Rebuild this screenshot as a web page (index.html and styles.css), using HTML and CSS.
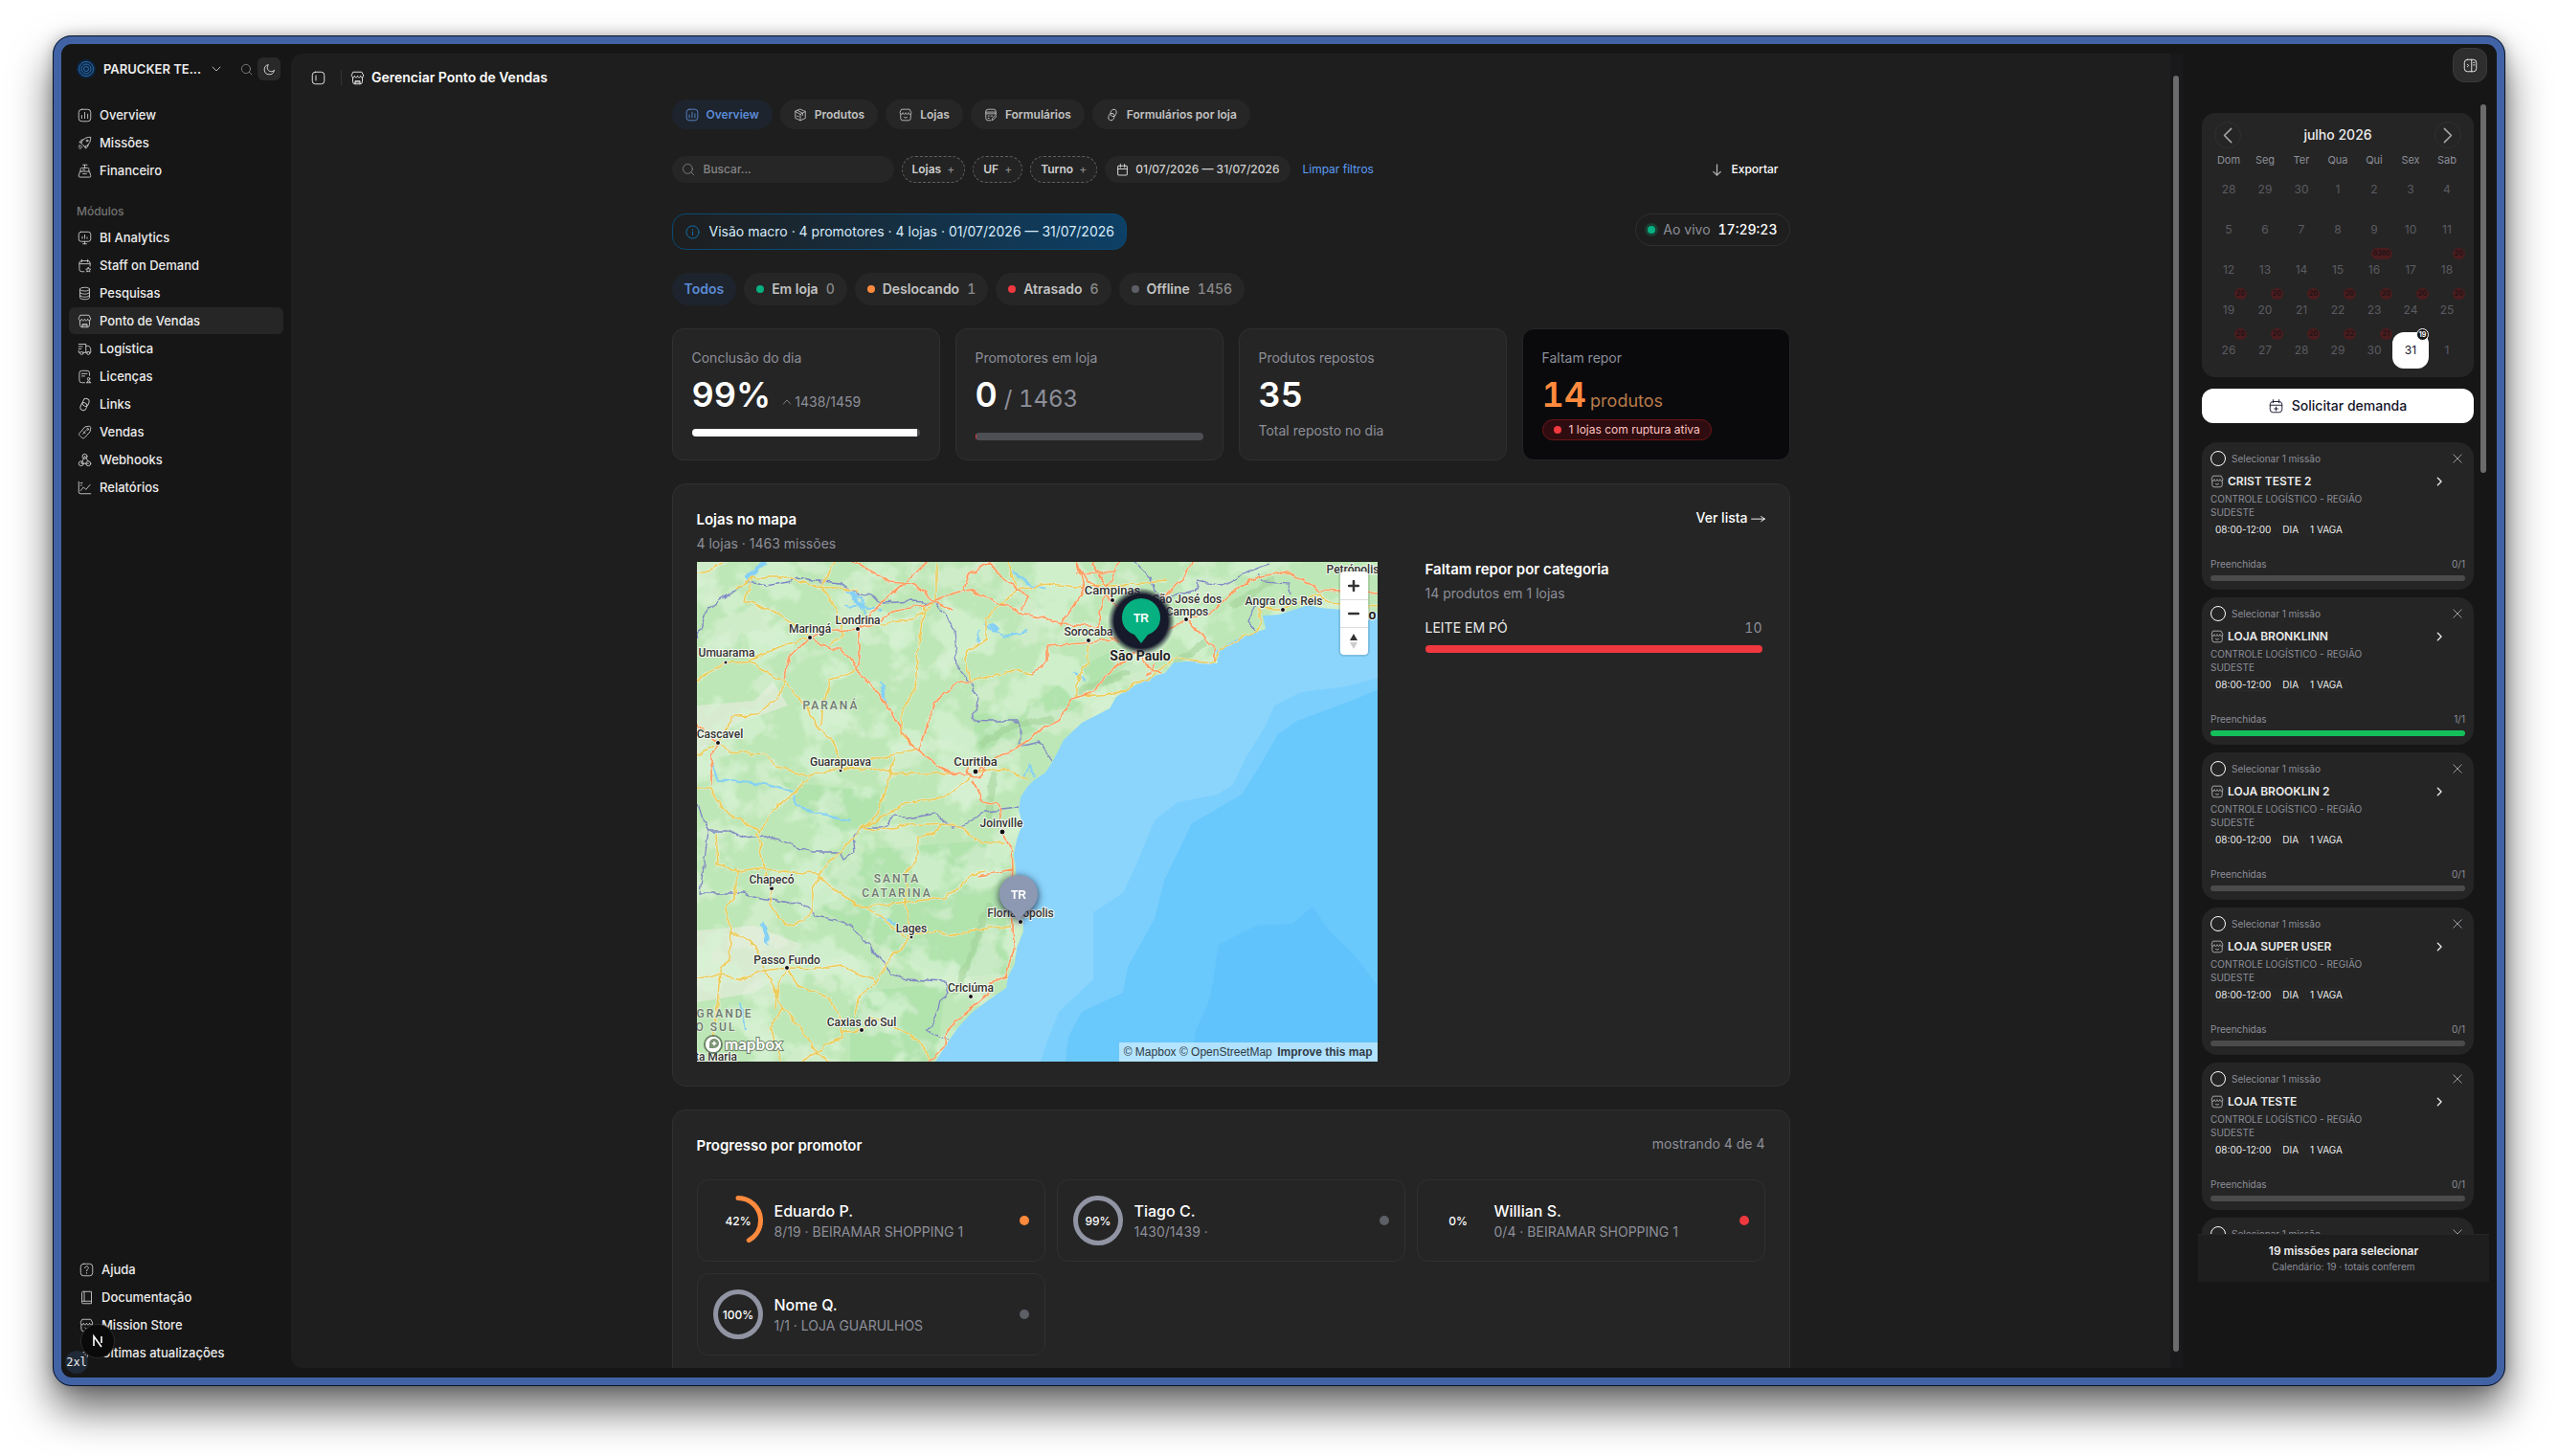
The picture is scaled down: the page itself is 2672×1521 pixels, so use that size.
FILE: index.html
```html
<!DOCTYPE html>
<html lang="pt-BR">
<head>
    <meta charset="UTF-8">
    <title>Gerenciar Ponto de Vendas</title>
    <link rel="stylesheet" href="styles.css">
</head>
<body>
    <!-- icon set -->
    <svg class="sprite" aria-hidden="true">
        <symbol id="i-chart" viewBox="0 0 24 24"><rect x="2" y="2" width="20" height="20" rx="5"/><path d="M7 17v-5M12 17V7M17 17v-7"/></symbol>
        <symbol id="i-rocket" viewBox="0 0 24 24"><path d="M9 15l-3-3c2-6 7-10 16-10 0 9-4 14-10 16zM7 11H3l3-4 4-1M13 17v4l4-3 1-4M6 16l-4 4M8 18l-4 4M4 15l-2 2"/><circle cx="16" cy="8" r="1.5"/></symbol>
        <symbol id="i-cash" viewBox="0 0 24 24"><path d="M5 13V9a2 2 0 0 1 2-2h10a2 2 0 0 1 2 2v4M12 7V2M9 2h7M2 20l2-7h16l2 7v1a1.500 1.500 0 0 1-1.500 1.500h-17A1.500 1.500 0 0 1 2 21zM9 17h6M9 10h3"/></symbol>
        <symbol id="i-board" viewBox="0 0 24 24"><rect x="2" y="2" width="20" height="16" rx="4"/><path d="M8 13v-3M12 13V7M16 13v-2M12 18v4M9 22h6"/></symbol>
        <symbol id="i-calstar" viewBox="0 0 24 24"><path d="M11 22H7a4 4 0 0 1-4-4V8a4 4 0 0 1 4-4h10a4 4 0 0 1 4 4v5M7 2v4M17 2v4M3 9h18M18 15l1 2.500 3 .3-2 2 .6 2.700-2.600-1.500-2.600 1.500.6-2.700-2-2 3-.3z"/></symbol>
        <symbol id="i-db" viewBox="0 0 24 24"><ellipse cx="12" cy="5" rx="8" ry="3"/><path d="M4 5v14c0 1.700 3.600 3 8 3s8-1.300 8-3V5M4 10c0 1.700 3.600 3 8 3s8-1.300 8-3M4 15c0 1.700 3.600 3 8 3s8-1.300 8-3"/></symbol>
        <symbol id="i-store" viewBox="0 0 24 24"><path d="M4 11v7a4 4 0 0 0 4 4h8a4 4 0 0 0 4-4v-7M5 2h14l3 6c0 4-5 4-5 0 0 4-5 4-5 0 0 4-5 4-5 0 0 4-5 4-5 0zM8 22v-5h8v5M8 19h8"/></symbol>
        <symbol id="i-shop" viewBox="0 0 24 24"><path d="M3 10v8a4 4 0 0 0 4 4h10a4 4 0 0 0 4-4v-8M5 2h14l3 6c0 4-5 4-5 0 0 4-5 4-5 0 0 4-5 4-5 0 0 4-5 4-5 0zM9 16c1 2 5 2 6 0"/></symbol>
        <symbol id="i-truck" viewBox="0 0 24 24"><path d="M2 4h12v14H9M14 7h3c3 0 5 3 5 6v5h-2M2 8h6M2 12h4M2 15v3h2M14 18h2"/><circle cx="7" cy="19" r="2.500"/><circle cx="18" cy="19" r="2.500"/></symbol>
        <symbol id="i-license" viewBox="0 0 24 24"><path d="M12 22H7a4 4 0 0 1-4-4V6a4 4 0 0 1 4-4h9a4 4 0 0 1 4 4v4M7 7h9M7 11h5M15 22h7M16 22l1-3h3l1 3"/><circle cx="18.500" cy="15.500" r="2"/></symbol>
        <symbol id="i-link" viewBox="0 0 24 24"><rect x="9" y="2" width="10" height="13" rx="5" transform="rotate(20 14 8)"/><rect x="5" y="9" width="10" height="13" rx="5" transform="rotate(20 10 16)"/></symbol>
        <symbol id="i-tag" viewBox="0 0 24 24"><path d="M13 3l6-1c2 0 3 1 3 3l-1 6-9 10c-2 2-4 1-6-1s-5-4-3-6zM9 15l5-6M10 11l3 3"/><circle cx="17" cy="7" r="1.500"/></symbol>
        <symbol id="i-hook" viewBox="0 0 24 24"><circle cx="12" cy="6" r="4"/><circle cx="6" cy="18" r="4"/><circle cx="18" cy="18" r="4"/><path d="M12 6l-6 12h12M12 6l6 8"/></symbol>
        <symbol id="i-trend" viewBox="0 0 24 24"><path d="M2 2v17a3 3 0 0 0 3 3h17M5 17l5-6 4 4 7-8M5 4h3M5 8h2"/></symbol>
        <symbol id="i-help" viewBox="0 0 24 24"><rect x="2" y="2" width="20" height="20" rx="5"/><path d="M9 9c0-4 6-4 6 0 0 2-3 2-3 5M12 17v1"/></symbol>
        <symbol id="i-book" viewBox="0 0 24 24"><path d="M4 19V4a2 2 0 0 1 2-2h14v16H6a2 2 0 0 0 0 4h14v-4M8 2v16"/></symbol>
        <symbol id="i-spark" viewBox="0 0 24 24"><path d="M12 3l2 7 7 2-7 2-2 7-2-7-7-2 7-2z"/></symbol>
        <symbol id="i-search" viewBox="0 0 24 24"><circle cx="11" cy="11" r="8.500"/><path d="M17 17l5 5"/></symbol>
        <symbol id="i-moon" viewBox="0 0 24 24"><path d="M21 14A9.500 9.500 0 1 1 10 3a7.500 7.500 0 0 0 11 11z"/></symbol>
        <symbol id="i-down" viewBox="0 0 24 24"><path d="M4 8l8 8 8-8"/></symbol>
        <symbol id="i-up" viewBox="0 0 24 24"><path d="M3 17l9-10 9 10"/></symbol>
        <symbol id="i-left" viewBox="0 0 24 24"><path d="M16 3l-9 9 9 9"/></symbol>
        <symbol id="i-right" viewBox="0 0 24 24"><path d="M8 3l9 9-9 9"/></symbol>
        <symbol id="i-panel" viewBox="0 0 24 24"><rect x="2" y="2" width="20" height="20" rx="5"/><path d="M8 8v8"/></symbol>
        <symbol id="i-sidebar" viewBox="0 0 24 24"><rect x="2" y="2" width="20" height="20" rx="5"/><path d="M14 2v20M7 10l2 2-2 2M17 7h2M17 11h2"/></symbol>
        <symbol id="i-box" viewBox="0 0 24 24"><path d="M12 2l9 4v12l-9 4-9-4V6zM3 6l9 5 9-5M12 11v11M7 4l9 5v4M6 14l3 1"/></symbol>
        <symbol id="i-form" viewBox="0 0 24 24"><path d="M12 22H7a4 4 0 0 1-4-4V6a4 4 0 0 1 4-4h10a4 4 0 0 1 4 4v6M3 7h18M3 10h18M7 14h2M12 14h3M7 18h2M14 21l1-3 5-5 2 2-5 5z"/></symbol>
        <symbol id="i-cal" viewBox="0 0 24 24"><rect x="3" y="4" width="18" height="18" rx="2"/><path d="M8 1v6M16 1v6M3 10h18"/></symbol>
        <symbol id="i-calplus" viewBox="0 0 24 24"><rect x="2" y="4" width="20" height="18" rx="5"/><path d="M7 1v5M17 1v5M2 10h20M12 13v6M9 16h6"/></symbol>
        <symbol id="i-info" viewBox="0 0 24 24"><circle cx="12" cy="12" r="10.500"/><path d="M12 11v6M12 7v1"/></symbol>
        <symbol id="i-arrow" viewBox="0 0 24 24"><path d="M12 3v18M6 15l6 6 6-6"/></symbol>
        <symbol id="i-long" viewBox="0 0 24 24"><path d="M1 13h22M17 9l6 4-6 4"/></symbol>
        <symbol id="i-x" viewBox="0 0 24 24"><path d="M2 2l20 20M22 2L2 22"/></symbol>
    </svg>

    <div class="window">
        <aside class="sidebar">
            <div class="workspace">
                <button class="workspace-btn">
                    <svg class="logo" viewBox="0 0 20 20"><circle cx="10" cy="10" r="10" fill="#0b2545"/><g fill="none" stroke="#2f6ea8"><circle cx="10" cy="10" r="7.500"/><circle cx="10" cy="10" r="5"/><circle cx="10" cy="10" r="2.500"/></g></svg>
                    <span>PARUCKER TE...</span>
                    <svg class="icon small"><use href="#i-down"/></svg>
                </button>
                <button class="icon-btn" aria-label="Buscar"><svg class="icon dim"><use href="#i-search"/></svg></button>
                <button class="icon-btn on" aria-label="Tema"><svg class="icon"><use href="#i-moon"/></svg></button>
            </div>
            <nav class="nav">
                <a href="#"><svg class="icon"><use href="#i-chart"/></svg>Overview</a>
                <a href="#"><svg class="icon"><use href="#i-rocket"/></svg>Missões</a>
                <a href="#"><svg class="icon"><use href="#i-cash"/></svg>Financeiro</a>
            </nav>
            <p class="nav-label">Módulos</p>
            <nav class="nav">
                <a href="#"><svg class="icon"><use href="#i-board"/></svg>BI Analytics</a>
                <a href="#"><svg class="icon"><use href="#i-calstar"/></svg>Staff on Demand</a>
                <a href="#"><svg class="icon"><use href="#i-db"/></svg>Pesquisas</a>
                <a href="#" class="active"><svg class="icon"><use href="#i-store"/></svg>Ponto de Vendas</a>
                <a href="#"><svg class="icon"><use href="#i-truck"/></svg>Logística</a>
                <a href="#"><svg class="icon"><use href="#i-license"/></svg>Licenças</a>
                <a href="#"><svg class="icon"><use href="#i-link"/></svg>Links</a>
                <a href="#"><svg class="icon"><use href="#i-tag"/></svg>Vendas</a>
                <a href="#"><svg class="icon"><use href="#i-hook"/></svg>Webhooks</a>
                <a href="#"><svg class="icon"><use href="#i-trend"/></svg>Relatórios</a>
            </nav>
            <nav class="nav nav-bottom">
                <a href="#"><svg class="icon"><use href="#i-help"/></svg>Ajuda</a>
                <a href="#"><svg class="icon"><use href="#i-book"/></svg>Documentação</a>
                <a href="#"><svg class="icon"><use href="#i-shop"/></svg>Mission Store</a>
                <a href="#"><svg class="icon"><use href="#i-spark"/></svg>Últimas atualizações</a>
            </nav>
            <span class="breakpoint">2xl</span>
            <button class="dev-badge" aria-label="Dev tools">
                <svg viewBox="0 0 16 16"><path d="M4 13V3l8 11M12 3v7" fill="none" stroke="#fff" stroke-width="1.600"/></svg>
            </button>
        </aside>

        <main class="main">
            <div class="main-scroll">
                <header class="topbar">
                    <button class="plain" aria-label="Menu"><svg class="icon"><use href="#i-panel"/></svg></button>
                    <span class="divider"></span>
                    <svg class="icon"><use href="#i-store"/></svg>
                    <h1>Gerenciar Ponto de Vendas</h1>
                </header>

                <div class="content">
                    <div class="tabs">
                        <button class="tab active"><svg class="icon"><use href="#i-chart"/></svg>Overview</button>
                        <button class="tab"><svg class="icon"><use href="#i-box"/></svg>Produtos</button>
                        <button class="tab"><svg class="icon"><use href="#i-shop"/></svg>Lojas</button>
                        <button class="tab"><svg class="icon"><use href="#i-form"/></svg>Formulários</button>
                        <button class="tab"><svg class="icon"><use href="#i-link"/></svg>Formulários por loja</button>
                    </div>

                    <div class="filters">
                        <label class="search"><svg class="icon"><use href="#i-search"/></svg><input type="text" placeholder="Buscar..." aria-label="Buscar"></label>
                        <button class="filter">Lojas <span>+</span></button>
                        <button class="filter">UF <span>+</span></button>
                        <button class="filter">Turno <span>+</span></button>
                        <button class="date"><svg class="icon"><use href="#i-cal"/></svg>01/07/2026 — 31/07/2026</button>
                        <a href="#" class="clear">Limpar filtros</a>
                        <button class="export"><svg class="icon"><use href="#i-arrow"/></svg>Exportar</button>
                    </div>

                    <div class="macro">
                        <div class="banner"><svg class="icon"><use href="#i-info"/></svg>Visão macro · 4 promotores · 4 lojas · 01/07/2026 — 31/07/2026</div>
                        <div class="live"><i></i><span>Ao vivo</span><b>17:29:23</b></div>
                    </div>

                    <div class="chips">
                        <button class="chip active">Todos</button>
                        <button class="chip"><i class="dot green"></i>Em loja <span>0</span></button>
                        <button class="chip"><i class="dot orange"></i>Deslocando <span>1</span></button>
                        <button class="chip"><i class="dot red"></i>Atrasado <span>6</span></button>
                        <button class="chip"><i class="dot gray"></i>Offline <span>1456</span></button>
                    </div>

                    <section class="stats">
                        <article class="stat">
                            <h2>Conclusão do dia</h2>
                            <p class="figure"><strong>99%</strong><svg class="icon"><use href="#i-up"/></svg><small>1438/1459</small></p>
                            <div class="bar"><div class="fill white" style="width: 99%"></div></div>
                        </article>
                        <article class="stat">
                            <h2>Promotores em loja</h2>
                            <p class="figure"><strong>0</strong><span class="total">/ 1463</span></p>
                            <div class="bar low"><div class="fill red" style="width: 0.5%"></div></div>
                        </article>
                        <article class="stat">
                            <h2>Produtos repostos</h2>
                            <p class="figure"><strong>35</strong></p>
                            <p class="note">Total reposto no dia</p>
                        </article>
                        <article class="stat alert">
                            <h2>Faltam repor</h2>
                            <p class="figure"><strong>14</strong><span class="unit">produtos</span></p>
                            <p class="rupture"><i class="dot red"></i>1 lojas com ruptura ativa</p>
                        </article>
                    </section>

                    <section class="card map-card">
                        <header class="card-head">
                            <div>
                                <h2>Lojas no mapa</h2>
                                <p>4 lojas · 1463 missões</p>
                            </div>
                            <a href="#">Ver lista <svg class="icon"><use href="#i-long"/></svg></a>
                        </header>
                        <div class="map-row">
                            <div class="map">
                                <svg class="map-art" viewBox="0 0 711 522" preserveAspectRatio="xMidYMid slice">
                                    <defs>
                                        <filter id="rough" x="-5%" y="-5%" width="110%" height="110%"><feTurbulence type="fractalNoise" baseFrequency="0.09" numOctaves="2" seed="4"/><feDisplacementMap in="SourceGraphic" scale="7" xChannelSelector="R" yChannelSelector="G"/></filter>
                                        <filter id="patch-light" x="0" y="0" width="100%" height="100%"><feTurbulence type="fractalNoise" baseFrequency="0.022" numOctaves="4" seed="11"/><feColorMatrix values="0 0 0 0 .835  0 0 0 0 .918  0 0 0 0 .8  9 0 0 0 -5"/></filter>
                                        <filter id="patch-dark" x="0" y="0" width="100%" height="100%"><feTurbulence type="fractalNoise" baseFrequency="0.02" numOctaves="4" seed="23"/><feColorMatrix values="0 0 0 0 .68  0 0 0 0 .89  0 0 0 0 .66  0 9 0 0 -4.700"/></filter>
                                        <clipPath id="land"><path d="M0 0H711V53L690 51 651 48 639 45 608 55 591 56 594 70 565 80 551 88 541 93 544 106 522 103 498 105 489 116 474 120 450 133 438 141 431 153 402 168 383 186 376 200 370 211 364 220 352 228 345 235 338 246 336 260 340 273 334 290 331 306 333 320 335 343 340 366 341 386 334 403 332 420 325 433 323 445 307 456 288 470 273 486 261 503 249 522H0z"/></clipPath>
                                    </defs>
                                    <rect width="711" height="522" fill="#8bd5fd"/>
                                    <path fill="#7bcffd" d="M711 121L679 130 631 136 603 150 593 173 574 203 560 233 543 243 502 251 478 270 459 316 445 346 414 366 414 436 378 470 364 506 359 522H711z"/>
                                    <path fill="#69c8fc" d="M711 133L689 143 627 166 607 180 588 213 569 243 517 273 488 333 478 373 450 423 445 450 402 470 388 496 385 522H711z"/>
                                    <path fill="#61c3fb" d="M643 360L622 378 584 380 545 400 536 456 521 490 517 522H711V443L694 420 679 403 660 385z"/>
                                    <g clip-path="url(#land)">
                                        <rect width="711" height="522" fill="#bde7b6"/>
                                        <path fill="#d8ead0" d="M0 150L60 145 80 125 95 150 40 170 0 200zM0 385L60 380 110 400 90 430 60 450 0 460z"/>
                                        <path fill="#b1e3ad" d="M290 200L370 170 440 120 480 110 440 90 400 110 350 150 290 160zM180 300L320 290 325 430 260 435 190 400 110 350zM90 230L190 240 200 270 130 290zM160 450L260 440 250 522H160z"/>
                                        <rect width="711" height="522" filter="url(#patch-light)" opacity=".4"/>
                                        <rect width="711" height="522" filter="url(#patch-dark)" opacity=".7"/>
                                        <path fill="none" stroke="#9fd094" stroke-width="7" stroke-linecap="round" opacity=".5" filter="url(#rough)" d="M298 190L330 170 370 165M400 135L450 115M500 105L530 85M560 45L600 20M310 222L305 270M270 450L290 400 305 360"/>
                                        <g fill="none" stroke="#85d0f5" stroke-width="2" filter="url(#rough)">
                                            <path d="M155 30L172 36 176 54M155 46L192 50M300 65L320 78 345 72M292 88L296 70M330 10L345 22 365 28M192 125L198 148M15 210L22 228 70 232 100 240 105 255 160 272M190 372L210 378M68 375L75 400M45 460L50 490M395 115L405 125M340 225L348 212 352 225"/>
                                            <path stroke-width="5" d="M50 18L72 0M160 32L174 50M306 64L316 72M192 130L196 142M68 378L74 396"/>
                                        </g>
                                        <g class="rail" filter="url(#rough)">
                                            <path d="M0 79L10 50 39 30 51 20 72 25 96 21 106 16 130 21 149 23 163 31 182 35 194 43 225 41 249 43 259 56 268 70 271 110 285 126 294 143 288 165 306 166 337 166 337 193 349 190 357 188 371 208"/>
                                            <path d="M457 0L474 16 478 30 490 38 520 30 523 20 550 25 575 11 598 2M586 12L592 21 618 23 620 33M584 46L576 63 586 75"/>
                                            <path d="M0 253L12 281 8 310 3 346 24 346 48 346 67 351 96 356 115 360 125 370 153 376 173 391 187 410 204 430 220 436 259 438 263 450 254 460 247 480 240 490 263 500"/>
                                            <path d="M12 281L34 281 48 288 72 286 120 303 149 303 153 311 165 303 163 285 175 278 197 278 206 263 220 268 249 263 268 278 278 276 302 261 335 257"/>
                                        </g>
                                    </g>
                                    <g id="roads" filter="url(#rough)">
                                        <g class="casing">
                                            <use href="#yellow"/><use href="#orange"/>
                                        </g>
                                        <g class="road-yellow">
                                            <path id="yellow" d="M0 12L12 10 26 0M39 28L58 16 96 16 125 26 168 30M58 16L51 40 87 55 118 79M0 125L30 105 53 105 91 125 87 140 63 160 39 161 22 189M53 105L82 90 118 79M144 0L130 26 146 50 153 76 139 86M91 125L110 146 130 176 144 190 150 216M0 201L22 189 34 198 70 201 87 216 115 223 150 216 187 206 206 201 232 193M150 216L182 215 206 221 263 221M168 113L139 123 132 146 130 170M237 46L230 100 228 133 216 153 213 180 225 191M250 0V41L225 60 182 66M335 28L316 46 302 60 302 80 280 96 285 125 330 113 352 116M325 0L335 28 368 23 397 26 434 25 490 20M409 81L407 106 397 126 397 140 438 138 474 120 498 101 541 105 546 91 588 70 588 45 612 50 641 36 651 33 660 43 711 46M0 236L15 236 24 256 51 273 67 283 75 263 96 246 120 223M20 283L22 316 44 323 63 320 87 323 125 326 144 343 173 361 220 355 259 351 278 336 287 326 302 323M63 283L70 320 78 341 77 356 87 373 101 381 120 366 120 346 127 326 149 303 173 278 216 253 259 246 287 223M173 278L187 281 220 275 259 273 278 278 297 295 321 293M256 273L249 283 230 288 230 310 218 326 218 356 223 390M177 361L197 375 216 390 249 386 273 391 287 383 328 381M223 390L197 420 187 440 168 456 165 476M0 435L24 431 46 436 77 426 94 424 130 425 149 421 182 436 187 441M41 320V346L29 363 36 386 60 400 72 426 82 450 89 466 108 486 125 513 139 522M36 386L34 413 24 430 20 476 17 500M94 424L106 443 139 456 149 476 151 496 125 511 110 522M151 490L172 489 182 476 201 483 235 503 242 520M89 466L77 486 87 522M94 424L84 443 82 466M206 205L200 230 189 263 173 278M345 228L320 215 291 219"/>
                                        </g>
                                        <g class="road-orange">
                                            <path id="orange" d="M163 0L201 21 225 23 249 42 268 50M240 0L220 20 192 43 170 68 170 100 166 112M118 79L139 90 151 90 168 113 192 140 223 190 263 221 287 222M118 79L96 100 91 123M118 79L134 73 168 70 182 66 205 52 249 42M250 41L278 28 285 13 305 0 316 13 345 36 340 50M278 28L306 38 345 55 388 65 419 68M352 116L366 103 366 88 402 85 440 80M291 219L316 203 335 195 359 175 378 166 392 143 414 136 431 115 450 100 464 93M464 80L498 68 512 60 536 53 562 30 584 16 617 10 651 30 711 33M397 0L404 16 434 41 450 63M414 0L426 23 434 40M442 0L431 23 419 60 419 68 440 85M397 12L440 10M380 66L404 30 397 0M520 0L498 26 478 46M512 63L531 80 541 90 541 105M232 196L239 176 249 146 273 126 284 124M287 228L299 250 316 253 318 283 328 300 329 320 328 333 330 380 331 403 323 433 306 440 302 453 278 473 261 490 259 506 242 522M0 170L22 189 15 203 15 233M329 321L306 326 294 328M282 216a9 9 0 1 0 18 0a9 9 0 1 0-18 0M462 93L470 110 485 116M478 108L470 118"/>
                                        </g>
                                    </g>
                                    <g class="towns">
                                        <circle cx="118" cy="79" r="2.500"/><circle cx="168" cy="70" r="2.500"/><circle cx="30" cy="105" r="2"/><circle cx="22" cy="189" r="2.500"/><circle cx="150" cy="218" r="2"/><circle cx="291" cy="219" r="3"/><circle cx="434" cy="40" r="2.500"/><circle cx="511" cy="60" r="2.500"/><circle cx="612" cy="50" r="2.500"/><circle cx="409" cy="82" r="2.500"/><circle cx="319" cy="282" r="3"/><circle cx="78" cy="341" r="2.500"/><circle cx="224" cy="392" r="2"/><circle cx="338" cy="376" r="2.500"/><circle cx="94" cy="424" r="2.500"/><circle cx="286" cy="454" r="2.500"/><circle cx="172" cy="489" r="2.500"/>
                                    </g>
                                    <g class="places">
                                        <text x="118" y="74">Maringá</text><text x="168" y="65">Londrina</text><text x="31" y="99">Umuarama</text><text x="24" y="184">Cascavel</text><text x="150" y="213">Guarapuava</text><text class="city" x="291" y="213">Curitiba</text><text class="city" x="434" y="34">Campinas</text><text x="512" y="43">São José dos</text><text x="512" y="56">Campos</text><text x="613" y="45">Angra dos Reis</text><text x="685" y="12">Petrópolis</text><text x="409" y="77">Sorocaba</text><text class="capital" x="463" y="103">São Paulo</text><text class="capital" x="699" y="60">Rio</text><text x="318" y="277">Joinville</text><text x="78" y="336">Chapecó</text><text x="224" y="387">Lages</text><text x="338" y="371">Florianópolis</text><text x="94" y="420">Passo Fundo</text><text x="286" y="449">Criciúma</text><text x="172" y="485">Caxias do Sul</text><text x="20" y="521">ta Maria</text>
                                    </g>
                                    <g class="states">
                                        <text x="140" y="154">PARANÁ</text><text x="209" y="335">SANTA</text><text x="209" y="350">CATARINA</text><text x="29" y="476">GRANDE</text><text x="20" y="490">O SUL</text>
                                    </g>
                                    <g class="mapbox">
                                        <circle cx="17" cy="504" r="9" fill="none" stroke="#6b8266" stroke-width="2"/><circle cx="17" cy="504" r="8" fill="#fff"/><path d="M13 508v-5a5 5 0 1 1 5 5z" fill="#7c9476"/><path d="M18 500l1 2 2 1-2 1-1 2-1-2-2-1 2-1z" fill="#fff"/>
                                        <text x="29" y="510">mapbox</text>
                                    </g>
                                </svg>
                                <svg class="pin halo" viewBox="0 0 70 70"><defs><radialGradient id="glow"><stop offset=".8" stop-color="#161a2b"/><stop offset="1" stop-color="#161a2b" stop-opacity="0"/></radialGradient></defs><circle cx="35" cy="35" r="35" fill="url(#glow)"/><path fill="#06b080" d="M35 58L28 49C20 46 15 40 15 31a20 20 0 0 1 40 0C55 40 50 46 42 49z"/><text x="35" y="36">TR</text></svg>
                                <svg class="pin gray-pin" viewBox="0 0 70 70"><path fill="#8d99b3" d="M35 59L27 49C20 46 15 40 15 31a20 20 0 0 1 40 0C55 40 50 46 43 49z"/><text x="35" y="36">TR</text></svg>
                                <div class="map-controls">
                                    <button aria-label="Zoom in"><svg viewBox="0 0 12 12"><path d="M6 1v10M1 6h10" stroke="#333" stroke-width="2.500" stroke-linecap="round"/></svg></button>
                                    <button aria-label="Zoom out"><svg viewBox="0 0 12 12"><path d="M1 6h10" stroke="#333" stroke-width="2.500" stroke-linecap="round"/></svg></button>
                                    <button aria-label="Reset bearing"><svg viewBox="0 0 12 18"><path d="M6 1L10 8H2z" fill="#333"/><path d="M2 10h8L6 17z" fill="#ccc"/></svg></button>
                                </div>
                                <div class="attribution"><a href="#">© Mapbox</a> <a href="#">© OpenStreetMap</a> <a href="#" class="improve">Improve this map</a></div>
                            </div>
                            <div class="categories">
                                <h2>Faltam repor por categoria</h2>
                                <p>14 produtos em 1 lojas</p>
                                <div class="category"><span>LEITE EM PÓ</span><em>10</em></div>
                                <div class="bar"><div class="fill red" style="width: 100%"></div></div>
                            </div>
                        </div>
                    </section>

                    <section class="card progress-card">
                        <header class="card-head">
                            <h2>Progresso por promotor</h2>
                            <p>mostrando 4 de 4</p>
                        </header>
                        <div class="promoters">
                            <article class="promoter">
                                <svg class="ring" viewBox="0 0 52 52"><circle cx="26" cy="26" r="23.500" pathLength="100" stroke="#ff8a3d" stroke-dasharray="42 100"/><text x="26" y="31">42%</text></svg>
                                <div><h3>Eduardo P.</h3><p>8/19 · BEIRAMAR SHOPPING 1</p></div>
                                <i class="dot big orange"></i>
                            </article>
                            <article class="promoter">
                                <svg class="ring" viewBox="0 0 52 52"><circle cx="26" cy="26" r="23.500" pathLength="100" stroke="#9194a3" stroke-dasharray="99 100"/><text x="26" y="31">99%</text></svg>
                                <div><h3>Tiago C.</h3><p>1430/1439 ·</p></div>
                                <i class="dot big gray"></i>
                            </article>
                            <article class="promoter">
                                <svg class="ring" viewBox="0 0 52 52"><text x="26" y="31">0%</text></svg>
                                <div><h3>Willian S.</h3><p>0/4 · BEIRAMAR SHOPPING 1</p></div>
                                <i class="dot big red"></i>
                            </article>
                            <article class="promoter">
                                <svg class="ring" viewBox="0 0 52 52"><circle cx="26" cy="26" r="23.500" pathLength="100" stroke="#9194a3"/><text x="26" y="31">100%</text></svg>
                                <div><h3>Nome Q.</h3><p>1/1 · LOJA GUARULHOS</p></div>
                                <i class="dot big gray"></i>
                            </article>
                        </div>
                    </section>
                </div>
            </div>
            <div class="rail-v"><span></span></div>
        </main>

        <aside class="agenda">
            <div class="agenda-top"><button aria-label="Painel"><svg class="icon"><use href="#i-sidebar"/></svg></button></div>
            <div class="agenda-scroll">
                <section class="calendar">
                    <header>
                        <button aria-label="Mês anterior"><svg class="icon"><use href="#i-left"/></svg></button>
                        <h2>julho 2026</h2>
                        <button aria-label="Próximo mês"><svg class="icon"><use href="#i-right"/></svg></button>
                    </header>
                    <table>
                        <thead><tr><th>Dom</th><th>Seg</th><th>Ter</th><th>Qua</th><th>Qui</th><th>Sex</th><th>Sab</th></tr></thead>
                        <tbody>
                            <tr><td>28</td><td>29</td><td>30</td><td>1</td><td>2</td><td>3</td><td>4</td></tr>
                            <tr><td>5</td><td>6</td><td>7</td><td>8</td><td>9</td><td>10</td><td>11</td></tr>
                            <tr><td>12</td><td>13</td><td>14</td><td>15</td><td>16<i>6380</i></td><td>17</td><td>18<i>20</i></td></tr>
                            <tr><td>19<i>20</i></td><td>20<i>20</i></td><td>21<i>20</i></td><td>22<i>20</i></td><td>23<i>20</i></td><td>24<i>20</i></td><td>25<i>20</i></td></tr>
                            <tr><td>26<i>20</i></td><td>27<i>20</i></td><td>28<i>20</i></td><td>29<i>22</i></td><td>30<i>21</i></td><td class="today"><button>31</button><i>19</i></td><td>1</td></tr>
                        </tbody>
                    </table>
                </section>

                <button class="request"><svg class="icon"><use href="#i-calplus"/></svg>Solicitar demanda</button>

                <div class="missions">
                    <article class="mission">
                        <div class="pick"><label><input type="checkbox">Selecionar 1 missão</label><button aria-label="Remover"><svg class="icon"><use href="#i-x"/></svg></button></div>
                        <h3><svg class="icon"><use href="#i-shop"/></svg><span>CRIST TESTE 2</span><svg class="icon go"><use href="#i-right"/></svg></h3>
                        <p class="desc">CONTROLE LOGÍSTICO - REGIÃO SUDESTE</p>
                        <p class="tags"><span>08:00-12:00</span><span>DIA</span><span>1 VAGA</span></p>
                        <p class="filled"><span>Preenchidas</span><span>0/1</span></p>
                        <div class="meter"><div style="width: 0%"></div></div>
                    </article>
                    <article class="mission">
                        <div class="pick"><label><input type="checkbox">Selecionar 1 missão</label><button aria-label="Remover"><svg class="icon"><use href="#i-x"/></svg></button></div>
                        <h3><svg class="icon"><use href="#i-shop"/></svg><span>LOJA BRONKLINN</span><svg class="icon go"><use href="#i-right"/></svg></h3>
                        <p class="desc">CONTROLE LOGÍSTICO - REGIÃO SUDESTE</p>
                        <p class="tags"><span>08:00-12:00</span><span>DIA</span><span>1 VAGA</span></p>
                        <p class="filled"><span>Preenchidas</span><span>1/1</span></p>
                        <div class="meter"><div style="width: 100%"></div></div>
                    </article>
                    <article class="mission">
                        <div class="pick"><label><input type="checkbox">Selecionar 1 missão</label><button aria-label="Remover"><svg class="icon"><use href="#i-x"/></svg></button></div>
                        <h3><svg class="icon"><use href="#i-shop"/></svg><span>LOJA BROOKLIN 2</span><svg class="icon go"><use href="#i-right"/></svg></h3>
                        <p class="desc">CONTROLE LOGÍSTICO - REGIÃO SUDESTE</p>
                        <p class="tags"><span>08:00-12:00</span><span>DIA</span><span>1 VAGA</span></p>
                        <p class="filled"><span>Preenchidas</span><span>0/1</span></p>
                        <div class="meter"><div style="width: 0%"></div></div>
                    </article>
                    <article class="mission">
                        <div class="pick"><label><input type="checkbox">Selecionar 1 missão</label><button aria-label="Remover"><svg class="icon"><use href="#i-x"/></svg></button></div>
                        <h3><svg class="icon"><use href="#i-shop"/></svg><span>LOJA SUPER USER</span><svg class="icon go"><use href="#i-right"/></svg></h3>
                        <p class="desc">CONTROLE LOGÍSTICO - REGIÃO SUDESTE</p>
                        <p class="tags"><span>08:00-12:00</span><span>DIA</span><span>1 VAGA</span></p>
                        <p class="filled"><span>Preenchidas</span><span>0/1</span></p>
                        <div class="meter"><div style="width: 0%"></div></div>
                    </article>
                    <article class="mission">
                        <div class="pick"><label><input type="checkbox">Selecionar 1 missão</label><button aria-label="Remover"><svg class="icon"><use href="#i-x"/></svg></button></div>
                        <h3><svg class="icon"><use href="#i-shop"/></svg><span>LOJA TESTE</span><svg class="icon go"><use href="#i-right"/></svg></h3>
                        <p class="desc">CONTROLE LOGÍSTICO - REGIÃO SUDESTE</p>
                        <p class="tags"><span>08:00-12:00</span><span>DIA</span><span>1 VAGA</span></p>
                        <p class="filled"><span>Preenchidas</span><span>0/1</span></p>
                        <div class="meter"><div style="width: 0%"></div></div>
                    </article>
                    <article class="mission">
                        <div class="pick"><label><input type="checkbox">Selecionar 1 missão</label><button aria-label="Remover"><svg class="icon"><use href="#i-x"/></svg></button></div>
                    </article>
                </div>
                <span class="thumb"></span>
            </div>
            <footer class="agenda-foot">
                <strong>19 missões para selecionar</strong>
                <p>Calendário: 19 · totais conferem</p>
            </footer>
        </aside>
    </div>
</body>
</html>
```
FILE: styles.css
```css
* {
    box-sizing: border-box;
    margin: 0;
    padding: 0;
}
body {
    height: 100vh;
    padding: 37px 55px 73px;
    background: #fff;
    font-family: Inter, sans-serif;
    font-size: 14px;
    line-height: 20px;
    color: #ececec;
    overflow: hidden;
}
button {
    font: inherit;
    color: inherit;
    background: none;
    border: none;
    cursor: pointer;
}
a {
    color: inherit;
    text-decoration: none;
}
.sprite {
    display: none;
}
.icon {
    flex: none;
    display: block;
    width: 15px;
    height: 15px;
    fill: none;
    stroke: currentColor;
    stroke-width: 1.5;
    stroke-linecap: round;
    stroke-linejoin: round;
}
.window {
    display: flex;
    height: 100%;
    background: #161616;
    border: 9px solid #4163a6;
    border-radius: 20px;
    outline: 1px solid #0c1220;
    outline-offset: -1px;
    box-shadow: 0 24px 44px rgba(0, 0, 0, 0.6), 0 0 14px rgba(0, 0, 0, 0.25);
}

/* sidebar */
.sidebar {
    position: relative;
    flex: none;
    display: flex;
    flex-direction: column;
    width: 240px;
    padding: 14px 8px 12px;
}
.workspace {
    display: flex;
    align-items: center;
    height: 24px;
    margin-bottom: 22px;
    padding: 0 3px 0 8px;
}
.workspace-btn {
    flex: 1;
    display: flex;
    align-items: center;
    gap: 8px;
    font-weight: 600;
    font-size: 13px;
}
.workspace-btn .small {
    width: 12px;
    height: 12px;
    margin-left: 2px;
}
.logo {
    width: 20px;
    height: 20px;
}
.icon-btn {
    display: grid;
    place-items: center;
    width: 24px;
    height: 24px;
    border-radius: 6px;
}
.icon-btn .icon {
    width: 13px;
    height: 13px;
}
.icon-btn.on {
    background: #292929;
}
.dim {
    color: #8a8a8a;
}
.nav {
    display: flex;
    flex-direction: column;
    gap: 1px;
}
.nav a {
    display: flex;
    align-items: center;
    gap: 8px;
    height: 28px;
    padding: 0 9px;
    border-radius: 6px;
    font-size: 13px;
    font-weight: 500;
}
.nav .icon {
    color: #c4c4c4;
}
.nav a.active {
    background: #262626;
}
.nav-label {
    margin: 19px 0 3px;
    padding: 0 8px;
    font-size: 12px;
    font-weight: 500;
    color: #747474;
}
.nav-bottom {
    margin-top: auto;
    padding-left: 2px;
}
.breakpoint {
    position: absolute;
    left: 4px;
    bottom: 4px;
    width: 24px;
    height: 24px;
    border-radius: 50%;
    background: #1f2937;
    font: 12px/24px "DejaVu Sans Mono", monospace;
    text-align: center;
}
.dev-badge {
    position: absolute;
    left: 20px;
    bottom: 20px;
    display: grid;
    place-items: center;
    width: 36px;
    height: 36px;
    border: 1px solid #2b2b2b;
    border-radius: 50%;
    background: #0a0a0a;
}
.dev-badge svg {
    width: 16px;
    height: 16px;
}

/* main panel */
.main {
    flex: 1;
    display: flex;
    min-width: 0;
    margin: 10px 0;
    background: #1e1e1e;
    border-radius: 12px 0 0 12px;
    overflow: hidden;
}
.main-scroll {
    flex: 1;
    min-width: 0;
    overflow: hidden;
}
.rail-v {
    width: 13px;
    padding: 23px 4px 17px 3px;
    background: #19191b;
}
.rail-v span {
    display: block;
    height: 100%;
    border-radius: 3px;
    background: #6b6b6b;
}
.topbar {
    display: flex;
    align-items: center;
    height: 48px;
    padding: 2px 21px 0;
}
.topbar h1 {
    margin-left: 7px;
    font-size: 14px;
    font-weight: 600;
    color: #fff;
}
.divider {
    width: 1px;
    height: 16px;
    margin: 0 9px 0 16px;
    background: #333;
}
.content {
    max-width: 1168px;
    margin: 0 auto;
}
.tabs,
.filters,
.chips {
    display: flex;
    align-items: center;
    gap: 8px;
}
.tab {
    display: flex;
    align-items: center;
    gap: 8px;
    height: 31px;
    padding: 0 14px;
    border-radius: 16px;
    background: #262626;
    font-size: 12px;
    font-weight: 600;
    color: #c2c2c2;
}
.tab .icon {
    width: 14px;
    height: 14px;
}
.tab.active,
.chip.active {
    background: #1e242d;
    color: #5b8ad6;
}
.filters {
    height: 28px;
    margin-top: 28px;
    font-size: 12px;
    font-weight: 500;
    color: #cfcfcf;
}
.search {
    display: flex;
    align-items: center;
    gap: 9px;
    width: 232px;
    height: 28px;
    padding: 0 10px;
    border-radius: 14px;
    background: #262626;
    color: #858585;
}
.search .icon {
    width: 14px;
    height: 14px;
}
.search input {
    width: 100%;
    border: none;
    outline: none;
    background: none;
    font: inherit;
    color: #eee;
}
.search input::placeholder {
    color: #858585;
}
.filter {
    height: 28px;
    padding: 0 10px;
    border: 1px dashed #5f5f5f;
    border-radius: 14px;
    background: #232323;
    font-weight: 600;
}
.filter span {
    margin-left: 3px;
    color: #8a8a8a;
    font-weight: 500;
}
.date {
    display: flex;
    align-items: center;
    gap: 7px;
    height: 28px;
    padding: 0 12px;
    border-radius: 14px;
    background: #262626;
}
.date .icon {
    width: 13px;
    height: 13px;
    stroke-width: 2;
}
.clear {
    margin-left: 4px;
    color: #5c9cf5;
    font-weight: 400;
}
.export {
    display: flex;
    align-items: center;
    gap: 7px;
    margin-left: auto;
    padding: 0 12px;
    color: #fff;
}
.export .icon {
    color: #b5b5b5;
    stroke-width: 2;
}
.macro {
    display: flex;
    align-items: flex-start;
    justify-content: space-between;
    margin-top: 32px;
}
.banner {
    display: flex;
    align-items: center;
    gap: 10px;
    height: 38px;
    padding: 0 12px 0 13px;
    border: 1px solid #0a4a75;
    border-radius: 14px;
    background: linear-gradient(90deg, #1e1e1e, #0d4066);
    color: #d6eafa;
}
.banner .icon {
    color: #1272ad;
}
.live {
    display: flex;
    align-items: center;
    height: 34px;
    padding: 0 12px;
    border: 1px solid #303030;
    border-radius: 17px;
    color: #8d8f99;
}
.live i {
    width: 8px;
    height: 8px;
    margin-right: 8px;
    border-radius: 50%;
    background: #06b080;
    box-shadow: 0 0 0 3px #1b3d32;
}
.live b {
    margin-left: 8px;
    font-weight: 500;
    color: #fff;
    font-variant-numeric: tabular-nums;
}
.chips {
    margin-top: 24px;
}
.chip {
    display: flex;
    align-items: center;
    gap: 8px;
    height: 34px;
    padding: 0 13px;
    border-radius: 17px;
    background: #262626;
    font-weight: 600;
    color: #c2c2c2;
}
.chip span {
    font-weight: 500;
    color: #8a8a8a;
    font-variant-numeric: tabular-nums;
}
.dot {
    flex: none;
    width: 8px;
    height: 8px;
    border-radius: 50%;
}
.dot.big {
    width: 10px;
    height: 10px;
}
.green { background: #06b080; }
.orange { background: #ff8a3d; }
.red { background: #f0383f; }
.gray { background: #5d5f66; }
.white { background: #fff; }

/* stat cards */
.stats {
    display: grid;
    grid-template-columns: repeat(4, 1fr);
    gap: 16px;
    margin: 24px 0;
}
.stat {
    height: 138px;
    padding: 20px;
    border: 1px solid #303030;
    border-radius: 12px;
    background: #252525;
}
.stat h2,
.note {
    font-size: 14px;
    font-weight: 400;
    color: #8d8f99;
}
.figure {
    display: flex;
    align-items: baseline;
    height: 40px;
    margin: 8px 0 16px;
    line-height: 40px;
    color: #8d8f99;
    font-variant-numeric: tabular-nums;
}
.figure strong {
    font-size: 36px;
    font-weight: 600;
    color: #fff;
}
.figure .icon {
    width: 10px;
    height: 10px;
    margin: 0 3px 0 12px;
    stroke-width: 2;
}
.figure small {
    font-size: 14px;
    font-variant-numeric: normal;
}
.total {
    margin-left: 7px;
    font-size: 24px;
}
.bar {
    height: 8px;
    border-radius: 4px;
    background: #4e4f54;
    overflow: hidden;
}
.bar.low {
    margin-top: 20px;
}
.fill {
    height: 100%;
}
.note {
    margin-top: -8px;
}
.stat.alert {
    border-color: #26262a;
    background: #0a0a0d;
}
.alert .figure {
    margin-bottom: 6px;
}
.alert .figure strong {
    color: #ff8a3d;
}
.unit {
    margin-left: 4px;
    font-size: 18px;
    color: #b87c4b;
}
.rupture {
    display: inline-flex;
    align-items: center;
    gap: 8px;
    height: 22px;
    padding: 0 11px;
    border: 1px solid #6b1517;
    border-radius: 11px;
    background: #2f0c0f;
    font-size: 12px;
    color: #fbc1c1;
}

/* cards */
.card {
    padding: 25px;
    border: 1px solid #303030;
    border-radius: 14px;
    background: #252525;
}
.card h2 {
    font-size: 15px;
    line-height: 24px;
    font-weight: 600;
    color: #fff;
}
.card p {
    color: #8d8f99;
}
.card-head {
    display: flex;
    justify-content: space-between;
}
.card-head a {
    display: flex;
    align-items: center;
    gap: 3px;
    height: 20px;
    font-weight: 500;
    color: #fff;
}
.map-card .card-head {
    height: 56px;
}
.map-card .card-head p {
    margin-top: 3px;
}
.map-row {
    display: grid;
    grid-template-columns: 711fr 405fr;
}
.map {
    position: relative;
    height: 522px;
    overflow: hidden;
    background: #8bd5fd;
}
.map-art {
    display: block;
    width: 100%;
    height: 100%;
}
.casing {
    fill: none;
    stroke: #f4f4e4;
    stroke-width: 3;
    opacity: 0.6;
}
.rail {
    fill: none;
    stroke: #7f86c4;
    stroke-width: 1.3;
}
.road-yellow {
    fill: none;
    stroke: #edcb55;
    stroke-width: 1.5;
}
.road-orange {
    fill: none;
    stroke: #ff9b5e;
    stroke-width: 1.7;
}
#yellow,
#orange {
    stroke-linejoin: round;
}
.towns circle {
    fill: #111;
    stroke: #fff;
    stroke-width: 1;
}
.places text {
    font: 500 12px Roboto, sans-serif;
    text-anchor: middle;
    fill: #333;
    stroke: #f5faf0;
    stroke-width: 2;
    stroke-linejoin: round;
    paint-order: stroke;
}
.places .city {
    font-size: 13px;
}
.places .capital {
    font-size: 14px;
    font-weight: 700;
    fill: #222;
}
.states text {
    font: 500 12px Roboto, sans-serif;
    letter-spacing: 2px;
    text-anchor: middle;
    fill: #6f7a70;
    stroke: #dcefd6;
    stroke-width: 2;
    paint-order: stroke;
}
.mapbox text {
    font: 700 17px Lato, sans-serif;
    fill: #fff;
    stroke: #6b8266;
    stroke-width: 2;
    paint-order: stroke;
}
.pin {
    position: absolute;
    width: 70px;
    height: 70px;
    overflow: visible;
}
.halo {
    left: calc(65% - 33px);
    top: 27px;
}
.gray-pin {
    left: calc(47% - 33px);
    top: 316px;
    filter: drop-shadow(0 2px 4px rgba(20, 25, 50, 0.9));
}
.pin text {
    font: 700 12px "Liberation Sans", sans-serif;
    text-anchor: middle;
    fill: #fff;
}
.map-controls {
    position: absolute;
    top: 10px;
    right: 10px;
    display: flex;
    flex-direction: column;
    width: 29px;
    border-radius: 4px;
    background: #fff;
    box-shadow: 0 0 0 2px rgba(0, 0, 0, 0.1);
}
.map-controls button {
    display: grid;
    place-items: center;
    height: 29px;
}
.map-controls button + button {
    border-top: 1px solid #ddd;
}
.map-controls svg {
    height: 12px;
    fill: none;
}
.map-controls button:last-child svg {
    height: 18px;
}
.attribution {
    position: absolute;
    right: 0;
    bottom: 0;
    padding: 0 5px;
    background: rgba(255, 255, 255, 0.5);
    font: 12px/20px "Liberation Sans", sans-serif;
    color: #2f3b44;
}
.improve {
    margin-left: 2px;
    font-weight: 700;
}
.categories {
    padding: 0 3px 0 50px;
}
.categories h2 {
    margin-top: -4px;
}
.categories p {
    margin-top: 3px;
}
.category {
    display: flex;
    justify-content: space-between;
    margin: 16px 0 8px;
}
.category em {
    font-style: normal;
    color: #8d8f99;
    font-variant-numeric: tabular-nums;
}
.progress-card {
    margin-top: 24px;
}
.promoters {
    display: grid;
    grid-template-columns: repeat(3, 1fr);
    gap: 12px;
    margin-top: 23px;
}
.promoter {
    display: flex;
    align-items: center;
    gap: 12px;
    height: 86px;
    padding: 0 16px;
    border: 1px solid #303030;
    border-radius: 12px;
}
.promoter > div {
    flex: 1;
}
.promoter h3 {
    font-size: 16px;
    line-height: 24px;
    font-weight: 500;
    color: #fff;
}
.ring {
    width: 52px;
    height: 52px;
}
.ring circle {
    fill: none;
    stroke-width: 5;
    stroke-linecap: round;
    transform: rotate(-90deg);
    transform-origin: center;
}
.ring text {
    font-size: 12px;
    font-weight: 500;
    text-anchor: middle;
    fill: #fff;
}

/* agenda */
.agenda {
    flex: none;
    display: flex;
    flex-direction: column;
    width: 328px;
    padding-bottom: 100px;
}
.agenda-top {
    display: flex;
    justify-content: flex-end;
    height: 62px;
    padding: 4px 10px 0;
}
.agenda-top button {
    display: grid;
    place-items: center;
    width: 36px;
    height: 36px;
    border: 1px solid #3a3a3a;
    border-radius: 12px;
    background: #2e2e2e;
}
.agenda-scroll {
    position: relative;
    flex: 1;
    min-height: 0;
    padding: 10px 24px 0 20px;
    overflow: hidden;
}
.thumb {
    position: absolute;
    top: 1px;
    right: 11px;
    width: 6px;
    height: 385px;
    border-radius: 3px;
    background: #6b6b6b;
}
.calendar {
    height: 276px;
    padding: 9px;
    border-radius: 14px;
    background: #252525;
}
.calendar header {
    display: flex;
    align-items: center;
    justify-content: space-between;
    padding: 0 4px;
}
.calendar h2 {
    font-size: 14px;
    font-weight: 500;
}
.calendar header button {
    display: grid;
    place-items: center;
    width: 28px;
    height: 28px;
    border: 1px solid #303030;
    border-radius: 50%;
    color: #a5a5a5;
}
.calendar header .icon {
    width: 19px;
    height: 19px;
    stroke-width: 2;
}
.calendar table {
    width: 100%;
    table-layout: fixed;
    border-collapse: collapse;
    text-align: center;
}
.calendar th {
    height: 22px;
    padding-top: 2px;
    font-size: 11px;
    font-weight: 400;
    color: #8d8f99;
}
.calendar td {
    position: relative;
    height: 42px;
    font-size: 12px;
    color: #5b5c62;
}
.calendar td i {
    position: absolute;
    top: -2px;
    right: 0;
    min-width: 13px;
    padding: 0 2px;
    border-radius: 7px;
    background: #4b1c1e;
    font: 700 7px/12px Inter, sans-serif;
    color: #201416;
}
.today button {
    width: 38px;
    height: 38px;
    border-radius: 12px;
    background: #fff;
    color: #14142b;
}
.calendar .today i {
    border: 1px solid #fff;
    padding: 0 1px;
    background: #161616;
    line-height: 11px;
    color: #fff;
}
.request {
    display: flex;
    align-items: center;
    justify-content: center;
    gap: 9px;
    width: 100%;
    height: 36px;
    margin: 12px 0 20px;
    border-radius: 12px;
    background: #fff;
    font-weight: 500;
    color: #14142b;
}
.missions {
    display: flex;
    flex-direction: column;
    gap: 8px;
}
.mission {
    min-height: 154px;
    padding: 9px;
    border-radius: 16px;
    background: #252525;
    font-size: 10px;
    line-height: 14px;
    color: #8d8f99;
}
.pick,
.filled {
    display: flex;
    align-items: center;
    justify-content: space-between;
}
.pick label {
    display: flex;
    align-items: center;
    gap: 6px;
}
.pick input {
    appearance: none;
    width: 16px;
    height: 16px;
    border: 1px solid #fff;
    border-radius: 50%;
}
.pick button {
    padding-right: 3px;
    color: #b5b5bd;
}
.pick .icon {
    width: 10px;
    height: 10px;
    stroke-width: 2;
}
.mission h3 {
    display: flex;
    align-items: center;
    height: 18px;
    margin: 7px 0 2px;
    padding-right: 22px;
    font-size: 12px;
    font-weight: 600;
    color: #ececec;
}
.mission h3 span {
    flex: 1;
}
.mission h3 .icon {
    width: 14px;
    height: 14px;
    margin-right: 4px;
    color: #b5b5b5;
}
.mission h3 .go {
    width: 10px;
    height: 10px;
    margin: 0;
    stroke-width: 3;
    color: #eee;
}
.desc {
    width: 170px;
}
.tags {
    display: flex;
    gap: 2px;
    margin: 4px 0 22px;
    color: #ececec;
}
.tags span {
    padding: 0 4px;
    border: 1px solid #2b2b2b;
    border-radius: 7px;
    line-height: 12px;
}
.meter {
    height: 6px;
    margin-top: 5px;
    border-radius: 3px;
    background: #4b4b4b;
    overflow: hidden;
}
.meter div {
    height: 100%;
    background: #14c05c;
}
.agenda-foot {
    height: 50px;
    margin: 0 8px 0 16px;
    padding-top: 9px;
    border-top: 1px solid #262626;
    background: #1e1e1e;
    text-align: center;
    font-size: 10px;
    line-height: 16px;
    color: #8d8f99;
}
.agenda-foot strong {
    font-size: 12px;
    font-weight: 600;
    color: #ececec;
}
```
